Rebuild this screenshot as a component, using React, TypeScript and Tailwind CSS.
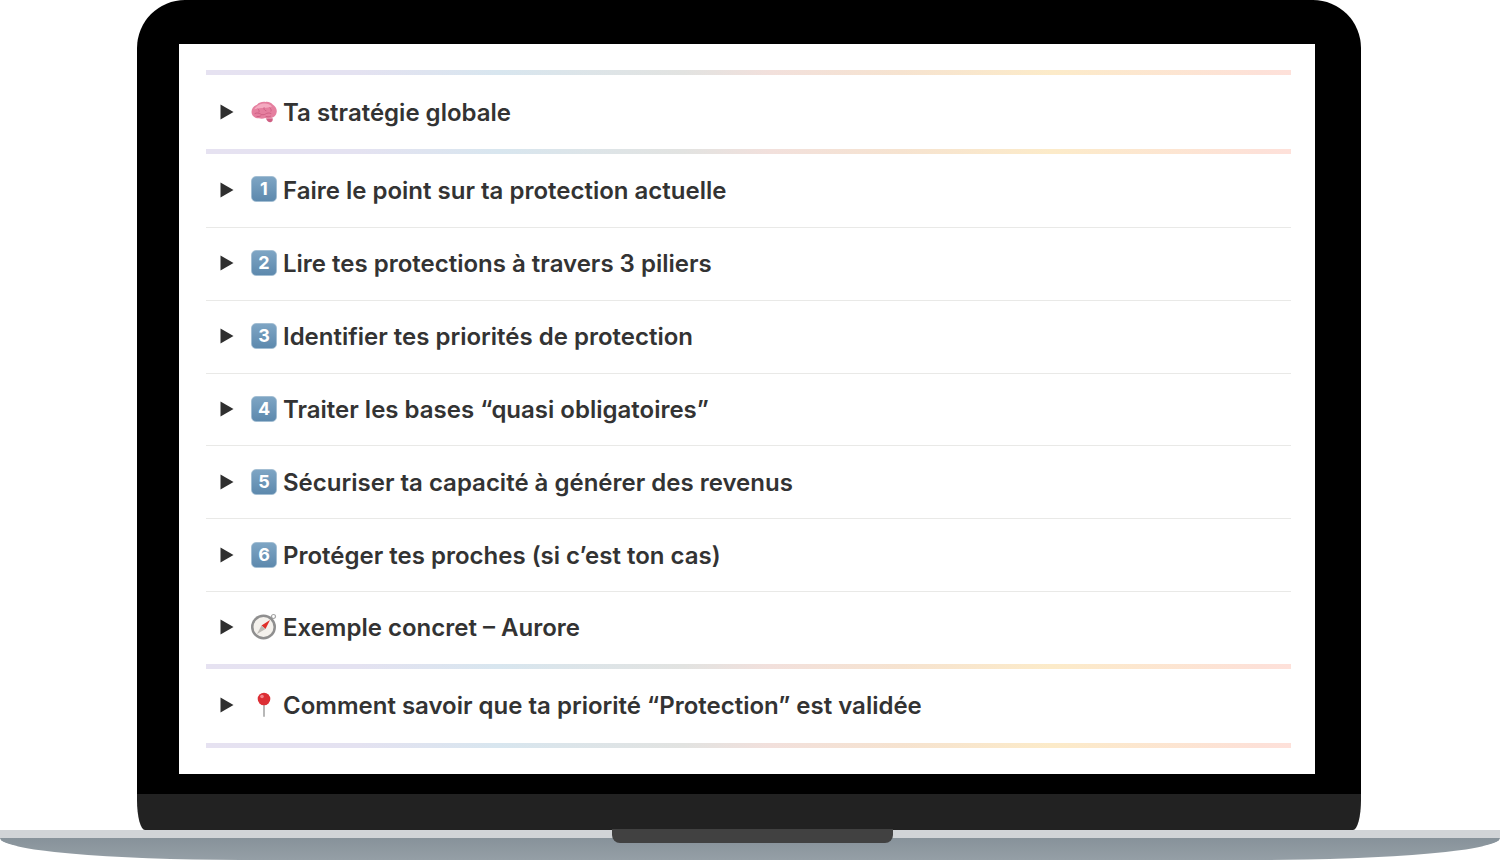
function Caret() {
  return (
    <svg className="w-[14px] h-[16px] shrink-0 ml-[14px] mr-[17px] -mt-[2px]" viewBox="0 0 14 16">
      <polygon points="0.5,0.5 13.5,8 0.5,15.5" fill="#2f2f2f" />
    </svg>
  )
}

function Keycap({ n }: { n: number }) {
  return (
    <div className="w-[26px] h-[26px] shrink-0 -mt-[3px] rounded-[5px] bg-gradient-to-b from-[#7ea5c4] to-[#5d89ad] border border-[#a3bed3] flex items-center justify-center text-white text-[18px] font-bold leading-none">
      {n}
    </div>
  )
}

function Brain() {
  return (
    <svg className="w-[27px] h-[25px] shrink-0 -mt-[1px] -mr-[1px]" viewBox="0 0 27 24">
      <path d="M15 18c.8 2.500 2.500 4 4.500 3.800 1.800-.2 2.500-2 2.200-4z" fill="#cf5f83" />
      <path
        d="M.5 11.500C.5 8 3 5 6 4.200 8 2 11.500 1 14.500 1.500c2.500-.5 5.500.5 7.200 2.500 2.500 1.500 4.500 4.500 4 7.500-.3 3-2.500 5.500-5.500 6-2 1-4.500 .8-6 0-2 .8-4.500 .8-6.200 .2C4 18 .5 15.500 .5 11.500z"
        fill="#e57f9f"
      />
      <path
        d="M3 9c2-3 5-5.500 9-6 3.500-.5 7 .5 9 3-3 .5-5 1.500-8 1.500S6 7.500 3 9z"
        fill="#f4aac0"
      />
      <path
        d="M4 13c2-1 4-.5 5.500.5s3.500 1 5 0 3.500-1.500 5.500-.5M7 8.500c1 .8 1.500 2 1 3M13 7c-.5 1.500.5 3 2 3.300M19 7.500c1 .8 1.500 2 1 3.200M6 16c1.500.3 3 0 4-.8M15 16c1.500.5 3 .3 4.500-.3"
        fill="none"
        stroke="#c9587e"
        strokeWidth="0.8"
        strokeLinecap="round"
      />
    </svg>
  )
}

function Compass() {
  return (
    <svg className="w-[26px] h-[27px] shrink-0 -mt-[3px]" viewBox="0 0 26 27">
      <circle cx="22.500" cy="3.500" r="2" fill="none" stroke="#a5a5a5" strokeWidth="1.200" />
      <circle cx="12.500" cy="14" r="12.500" fill="#8f8f8f" />
      <circle cx="12.500" cy="14" r="10" fill="#f4f1ec" />
      <polygon points="19,7 10.500,12.500 14.500,16" fill="#e0302a" />
      <polygon points="6,21 10.500,12.500 14.500,16" fill="#bdbab4" />
    </svg>
  )
}

function Pin() {
  return (
    <svg className="w-[26px] h-[26px] shrink-0 -mt-[3px]" viewBox="0 0 26 26">
      <rect x="12.300" y="10" width="1.400" height="15" rx="0.700" fill="#9a9a9a" />
      <circle cx="13" cy="7" r="6.300" fill="#dc2f35" />
      <circle cx="11" cy="4.500" r="1.800" fill="#f4858a" />
    </svg>
  )
}

function RainbowLine() {
  return (
    <div className="h-[5px] shrink-0 bg-[linear-gradient(90deg,#e6e2f1_0%,#e4e2f1_14%,#d8e6ef_27%,#e2e3e1_44%,#f2e0dc_52%,#f6e3d0_64%,#fcebc9_78%,#fde1d8_97%,#fee1da_100%)]" />
  )
}

function Row({ icon, title, box, last }: { icon: React.ReactNode; title: string; box: string; last?: boolean }) {
  return (
    <div className={`flex items-center shrink-0 box-border ${box} ${last ? '' : 'border-b border-[#e9e9e7]'}`}>
      <Caret />
      {icon}
      <span className="ml-[6px] text-[24px] leading-none font-semibold text-[#333333] whitespace-nowrap">
        {title}
      </span>
    </div>
  )
}

// row heights follow the reference's divider positions, they are not quite even
const steps = [
  { title: 'Faire le point sur ta protection actuelle', box: 'h-[74px]' },
  { title: 'Lire tes protections à travers 3 piliers', box: 'h-[73px]' },
  { title: 'Identifier tes priorités de protection', box: 'h-[73px]' },
  { title: 'Traiter les bases “quasi obligatoires”', box: 'h-[72px] pt-[1px]' },
  { title: 'Sécuriser ta capacité à générer des revenus', box: 'h-[73px] pt-[2px]' },
  { title: 'Protéger tes proches (si c’est ton cas)', box: 'h-[73px] pt-[2px]' },
]

export default function App() {
  return (
    <div className="w-[1500px] h-[861px] overflow-hidden bg-white font-['Inter',sans-serif] relative">
      <div className="ml-[137px] w-[1224px]">
        <div className="h-[794px] bg-black rounded-t-[48px] pt-[44px] pl-[42px] pr-[46px]">
          <div className="h-[730px] bg-white pt-[26px] pl-[27px] pr-[24px] flex flex-col">
            <RainbowLine />
            <Row box="h-[74px] pt-[2px]" last icon={<Brain />} title="Ta stratégie globale" />
            <RainbowLine />
            {steps.map((s, i) => (
              <Row key={s.title} box={s.box} icon={<Keycap n={i + 1} />} title={s.title} />
            ))}
            <Row box="h-[72px]" last icon={<Compass />} title="Exemple concret – Aurore" />
            <RainbowLine />
            <Row box="h-[74px]" last icon={<Pin />} title="Comment savoir que ta priorité “Protection” est validée" />
            <RainbowLine />
          </div>
        </div>
        <div className="h-[36px] bg-[#222222] rounded-b-[8px_30px]" />
      </div>
      <div className="h-[8px] bg-[#d1d4d7]" />
      <div className="h-[22px] bg-gradient-to-b from-[#87929a] to-[#959fa6] rounded-b-[240px_22px]" />
      <div className="absolute left-[612px] top-[829px] w-[281px] h-[14px] bg-[#414141] rounded-b-[8px]" />
    </div>
  )
}
